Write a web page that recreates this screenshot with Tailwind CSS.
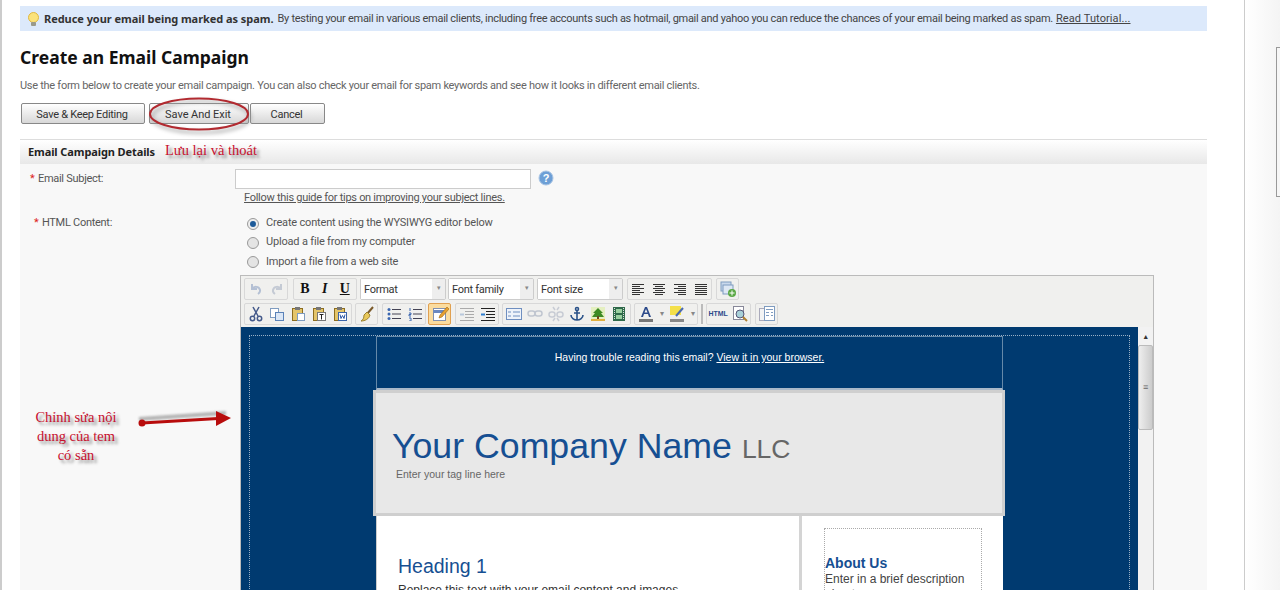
<!DOCTYPE html>
<html lang="vi">
<head>
  <meta charset="UTF-8">
  <title>Create an Email Campaign</title>
  <script src="https://cdn.jsdelivr.net/npm/@tailwindcss/browser@4"></script>
</head>
<body class="relative flex h-[590px] w-[1280px] overflow-hidden bg-white text-[11px] tracking-[-0.28px] text-[#555] [font-family:Roboto,sans-serif]">

  <!-- Main page -->
  <div class="h-[590px] w-[1245px] shrink-0 overflow-hidden border-r border-l-2 border-r-[#ccc] border-l-[#ccc] pt-[6px] pr-[37px] pl-[18px]">

    <!-- Tip bar -->
    <div class="flex h-[25px] items-center bg-[#dce9fb] pl-[6px] text-[#444]">
      <svg class="mr-[3px] shrink-0" width="15" height="16" viewBox="0 0 15 16"><circle cx="7.5" cy="6.5" r="5" fill="#fbe27a" stroke="#e0b840"/><rect x="5" y="11" width="5" height="4" rx="1" fill="#9a9a8a"/></svg>
      <span class="pt-[1px] font-bold tracking-[-0.05px] whitespace-nowrap text-[#333] [font-family:'Noto_Sans',sans-serif]">Reduce your email being marked as spam.</span>
      <span class="ml-[4px] pt-[2px] tracking-[-0.285px] whitespace-nowrap">By testing your email in various email clients, including free accounts such as hotmail, gmail and yahoo you can reduce the chances of your email being marked as spam.</span>
      <a class="ml-[3px] pt-[2px] tracking-[0.1px] whitespace-nowrap underline">Read Tutorial...</a>
    </div>

    <h1 class="mt-[15px] h-[22px] text-[17.500px] leading-[22px] font-bold tracking-normal text-[#111] [font-family:'Noto_Sans',sans-serif]">Create an Email Campaign</h1>
    <p class="mt-[10px] h-[16px] leading-[16px] text-[#666]">Use the form below to create your email campaign. You can also check your email for spam keywords and see how it looks in different email clients.</p>

    <!-- Buttons -->
    <div class="mt-[9px] flex h-[21px] pl-[1px] text-[#333]">
      <button class="h-[21px] w-[124px] rounded-[2px] border border-[#888] bg-gradient-to-b from-white to-[#d8d8d8] pt-[3px] pr-[2px]">Save &amp; Keep Editing</button>
      <button class="ml-[4px] h-[21px] w-[100px] rounded-[2px] border border-[#888] bg-gradient-to-b from-white to-[#d8d8d8] pt-[3px] pr-[2px] tracking-[-0.05px]">Save And Exit</button>
      <button class="ml-[1px] h-[21px] w-[75px] rounded-[2px] border border-[#888] bg-gradient-to-b from-white to-[#d8d8d8] pt-[3px] pr-[2px]">Cancel</button>
    </div>

    <!-- Section header -->
    <div class="mt-[15px] flex h-[25px] items-center border-t border-[#ddd] bg-gradient-to-b from-white to-[#e8e8e8] pl-[8px] font-bold tracking-[-0.1px] text-[#222] [font-family:'Noto_Sans',sans-serif]">Email Campaign Details</div>

    <!-- Form body -->
    <div class="h-[430px] bg-[#f8f8f8]">
      <div class="flex h-[39px] pt-[5px]">
        <label class="w-[215px] pt-[2px] pl-[10px] leading-[16px]"><span class="mr-[1px] text-[#d22]">*</span> Email Subject:</label>
        <div>
          <div class="flex items-center">
            <input class="h-[20px] w-[296px] border border-[#ccc] bg-white" type="text">
            <svg class="mt-[-3px] ml-[7px]" width="16" height="16" viewBox="0 0 16 16"><circle cx="8" cy="8" r="7" fill="#6d9fd6" stroke="#a8c4e4"/><text x="8" y="12" text-anchor="middle" font-size="11" font-weight="bold" fill="#fff" font-family="Liberation Sans">?</text></svg>
          </div>
          <a class="mt-[2px] block pl-[9px] leading-[14px] whitespace-nowrap underline">Follow this guide for tips on improving your subject lines.</a>
        </div>
      </div>
      <div class="flex h-[72px]">
        <label class="w-[215px] pt-[12px] pl-[14px] leading-[16px]"><span class="mr-[1px] text-[#d22]">*</span> HTML Content:</label>
        <div class="pt-[11px] pl-[12px] tracking-[-0.18px]">
          <div class="flex h-[19px] items-center">
            <span class="mr-[7px] flex h-[12px] w-[12px] items-center justify-center rounded-full border border-[#999] bg-[#eee]"><span class="h-[6px] w-[6px] rounded-full bg-[#1d5b9a]"></span></span>Create content using the WYSIWYG editor below
          </div>
          <div class="flex h-[19px] items-center">
            <span class="mr-[7px] h-[12px] w-[12px] rounded-full border border-[#999] bg-[#e4e4e4]"></span>Upload a file from my computer
          </div>
          <div class="flex h-[20px] items-center">
            <span class="mr-[7px] h-[12px] w-[12px] rounded-full border border-[#999] bg-[#e4e4e4]"></span>Import a file from a web site
          </div>
        </div>
      </div>

      <!-- Editor -->
      <div class="ml-[220px] h-[320px] w-[914px] border border-[#bbb] bg-[#f0f0ee] text-[#333]">

        <!-- Toolbar row 1 -->
        <div class="flex h-[25px] items-center pl-[3px]">
          <div class="flex h-[22px] w-[44px] items-center justify-around rounded-[2px] border border-[#d8d8d8]">
            <svg width="16" height="16" viewBox="0 0 16 16" fill="none" stroke="#b4c0d4" stroke-width="2"><path d="M4 3v5h5M4 8c2-3 7-3 8 1 .4 2-.5 3-2 4"/></svg>
            <svg width="16" height="16" viewBox="0 0 16 16" fill="none" stroke="#c4cad4" stroke-width="2"><path d="M12 3v5H7M12 8c-2-3-7-3-8 1-.4 2 .5 3 2 4"/></svg>
          </div>
          <div class="ml-[5px] flex h-[22px] w-[64px] items-center justify-around rounded-[2px] border border-[#d8d8d8] text-[14px] font-bold text-[#111] [font-family:'Liberation_Serif',serif]">
            <span>B</span><span class="italic">I</span><span class="underline">U</span>
          </div>
          <div class="ml-[3px] flex h-[22px] w-[86px] rounded-[2px] border border-[#ccc]"><span class="flex-1 bg-white pl-[3px] leading-[22px]">Format</span><span class="flex w-[13px] items-center justify-center bg-[#eee] text-[7px] text-[#888]">▾</span></div>
          <div class="ml-[2px] flex h-[22px] w-[86px] rounded-[2px] border border-[#ccc]"><span class="flex-1 bg-white pl-[3px] leading-[22px]">Font family</span><span class="flex w-[13px] items-center justify-center bg-[#eee] text-[7px] text-[#888]">▾</span></div>
          <div class="ml-[3px] flex h-[22px] w-[86px] rounded-[2px] border border-[#ccc]"><span class="flex-1 bg-white pl-[3px] leading-[22px]">Font size</span><span class="flex w-[13px] items-center justify-center bg-[#eee] text-[7px] text-[#888]">▾</span></div>
          <div class="ml-[4px] flex h-[22px] w-[85px] items-center justify-around rounded-[2px] border border-[#d8d8d8]">
            <svg width="14" height="12" viewBox="0 0 14 12" stroke="#333"><path d="M1 1.500h12M1 3.500h8M1 5.500h12M1 7.500h8M1 9.500h12M1 11.500h8"/></svg>
            <svg width="14" height="12" viewBox="0 0 14 12" stroke="#333"><path d="M1 1.500h12M3 3.500h8M1 5.500h12M3 7.500h8M1 9.500h12M3 11.500h8"/></svg>
            <svg width="14" height="12" viewBox="0 0 14 12" stroke="#333"><path d="M1 1.500h12M5 3.500h8M1 5.500h12M5 7.500h8M1 9.500h12M5 11.500h8"/></svg>
            <svg width="14" height="12" viewBox="0 0 14 12" stroke="#333"><path d="M1 1.500h12M1 3.500h12M1 5.500h12M1 7.500h12M1 9.500h12M1 11.500h12"/></svg>
          </div>
          <div class="ml-[4px] flex h-[22px] w-[23px] items-center justify-center rounded-[2px] border border-[#d8d8d8]">
            <svg width="18" height="18" viewBox="0 0 18 18"><rect x="2" y="2" width="10" height="9" fill="#c9d8ec" stroke="#7f9cc0"/><rect x="4" y="5" width="10" height="9" fill="#dde7f4" stroke="#7f9cc0"/><circle cx="13" cy="13" r="4" fill="#5aa845"/><path d="M13 10.500v5M10.500 13h5" stroke="#fff"/></svg>
          </div>
        </div>

        <!-- Toolbar row 2 -->
        <div class="flex h-[26px] items-center pl-[3px]">
          <div class="flex h-[22px] w-[108px] items-center justify-around rounded-[2px] border border-[#d8d8d8]">
            <svg width="16" height="16" viewBox="0 0 16 16" fill="none" stroke="#44598a" stroke-width="1.500"><path d="M5 1l5 9M11 1L6 10"/><circle cx="4.500" cy="12.500" r="2.200"/><circle cx="11.500" cy="12.500" r="2.200"/></svg>
            <svg width="16" height="16" viewBox="0 0 16 16"><rect x="1.500" y="2.500" width="8" height="9" fill="#fff" stroke="#7f9cc0"/><rect x="6.500" y="6.500" width="8" height="8" fill="#dbe7f6" stroke="#5a82b8"/></svg>
            <svg width="16" height="16" viewBox="0 0 16 16"><rect x="2.500" y="2.500" width="10" height="12" fill="#e4c56a" stroke="#8c6d1f"/><rect x="5" y="1" width="5" height="3" fill="#777"/><rect x="7.500" y="7.500" width="7" height="7" fill="#fff" stroke="#7f9cc0"/></svg>
            <svg width="16" height="16" viewBox="0 0 16 16"><rect x="2.500" y="2.500" width="10" height="12" fill="#e4c56a" stroke="#8c6d1f"/><rect x="5" y="1" width="5" height="3" fill="#777"/><rect x="6.500" y="6.500" width="8" height="8" fill="#fff" stroke="#777"/><path d="M8.500 8.500h4M10.500 8.500v5" stroke="#222"/></svg>
            <svg width="16" height="16" viewBox="0 0 16 16"><rect x="2.500" y="2.500" width="10" height="12" fill="#e4c56a" stroke="#8c6d1f"/><rect x="5" y="1" width="5" height="3" fill="#777"/><rect x="6.500" y="6.500" width="8" height="8" fill="#fff" stroke="#3c64a8"/><path d="M8 8.500l1 4 1.500-3 1.500 3 1-4" fill="none" stroke="#2b57a8"/></svg>
          </div>
          <div class="ml-[3px] flex h-[22px] w-[23px] items-center justify-center rounded-[2px] border border-[#d8d8d8]">
            <svg width="18" height="18" viewBox="0 0 18 18"><path d="M15 2l-6 7" stroke="#7a5a2a" stroke-width="2"/><path d="M9 7l3 3c-1 4-5 6-9 6 2-1 3-3 3-6z" fill="#e8c85a" stroke="#9a8030"/></svg>
          </div>
          <div class="ml-[4px] flex h-[22px] w-[44px] items-center justify-around rounded-[2px] border border-[#d8d8d8]">
            <svg width="14" height="14" viewBox="0 0 14 14"><path d="M5 2.500h9M5 7h9M5 11.500h9" stroke="#445"/><circle cx="2" cy="2.500" r="1.500" fill="#3a66b0"/><circle cx="2" cy="7" r="1.500" fill="#3a66b0"/><circle cx="2" cy="11.500" r="1.500" fill="#3a66b0"/></svg>
            <svg width="14" height="14" viewBox="0 0 14 14"><path d="M5 2.500h9M5 7h9M5 11.500h9" stroke="#445"/><path d="M2 1v3M1 6h2v1.500H1V9h2M1 11h2v3H1" fill="none" stroke="#3a66b0"/></svg>
          </div>
          <div class="ml-[2px] flex h-[22px] w-[23px] items-center justify-center rounded-[2px] border border-[#e0a050] bg-[#fbdc9e]">
            <svg width="18" height="18" viewBox="0 0 18 18"><rect x="2.500" y="3.500" width="12" height="12" fill="#fff" stroke="#8090b0"/><path d="M2.500 6.500h12" stroke="#6a88c0" stroke-width="3"/><path d="M16 2l-7 8-1 3 3-1 7-8z" fill="#e8a030" stroke="#a06a10" stroke-width=".6"/></svg>
          </div>
          <div class="ml-[4px] flex h-[22px] w-[44px] items-center justify-around rounded-[2px] border border-[#d8d8d8]">
            <svg width="15" height="14" viewBox="0 0 15 14" stroke="#aaa"><path d="M1 1.500h14M6 4.500h9M6 7.500h9M6 10.500h9M1 13.500h14"/><path d="M1 7.500h4" stroke="#b8c8dc" stroke-width="2"/></svg>
            <svg width="15" height="14" viewBox="0 0 15 14" stroke="#222"><path d="M1 1.500h14M6 4.500h9M6 7.500h9M6 10.500h9M1 13.500h14"/><path d="M1 7.500h4" stroke="#2f7fd0" stroke-width="2"/></svg>
          </div>
          <div class="ml-[3px] flex h-[22px] w-[129px] items-center justify-around rounded-[2px] border border-[#d8d8d8]">
            <svg width="16" height="16" viewBox="0 0 16 16"><rect x=".5" y="2.500" width="15" height="11" fill="#eef3fa" stroke="#6f8fc0"/><path d="M2 6h3M7 6h7M2 10h3M7 10h7" stroke="#6f8fc0"/></svg>
            <svg width="16" height="16" viewBox="0 0 16 16" fill="none" stroke="#c0c6d0" stroke-width="1.500"><rect x="1" y="5" width="7" height="5" rx="2.500"/><rect x="8" y="5" width="7" height="5" rx="2.500"/></svg>
            <svg width="16" height="16" viewBox="0 0 16 16" fill="none" stroke="#c8ccd4" stroke-width="1.500"><rect x="1" y="6" width="6" height="5" rx="2.500"/><rect x="9" y="6" width="6" height="5" rx="2.500"/><path d="M5 1l2 3M11 1L9 4M5 15l2-3M11 15l-2-3"/></svg>
            <svg width="16" height="16" viewBox="0 0 16 16" fill="none" stroke="#2a5288" stroke-width="1.600"><circle cx="8" cy="3" r="1.500"/><path d="M8 4.500V14M5 7h6M2 9c0 3 3 5 6 5s6-2 6-5"/></svg>
            <svg width="16" height="16" viewBox="0 0 16 16"><rect x="1" y="1" width="14" height="14" fill="#e4efc0"/><path d="M8 2l5 5-2 0 3 4H2l3-4-2 0z" fill="#3d8a24"/><rect x="7" y="10" width="2" height="3" fill="#6b4a1e"/><rect x="1" y="13" width="14" height="2" fill="#e0b040"/></svg>
            <svg width="16" height="16" viewBox="0 0 16 16"><rect x="2" y="1" width="12" height="14" fill="#2f6a4a"/><rect x="5" y="3" width="6" height="4" fill="#9ad0a0"/><rect x="5" y="9" width="6" height="4" fill="#9ad0a0"/><path d="M3.500 2v12M12.500 2v12" stroke="#ddd" stroke-dasharray="1 1"/></svg>
          </div>
          <div class="ml-[3px] flex h-[22px] w-[64px] items-center justify-around rounded-[2px] border border-[#d8d8d8] text-[8px] text-[#888]">
            <svg width="18" height="18" viewBox="0 0 18 18"><path d="M4 12l4-10h2l4 10h-2l-1-3H7l-1 3zM7.500 7.500h3L9 4z" fill="#2c4a8a"/><rect x="2" y="14" width="14" height="3" fill="#777"/></svg><span>▾</span>
            <svg width="18" height="18" viewBox="0 0 18 18"><rect x="2" y="14" width="14" height="3" fill="#888"/><rect x="2" y="1" width="11" height="9" fill="#f4e04a"/><path d="M15 3l-7 8" stroke="#4a6ab0" stroke-width="2"/></svg><span>▾</span>
          </div>
          <div class="mx-[3px] h-[20px] w-[2px] bg-[#bbb]"></div>
          <div class="flex h-[22px] w-[45px] items-center justify-around rounded-[2px] border border-[#d8d8d8]">
            <span class="text-[7px] font-bold tracking-normal text-[#2c4a8a] [font-family:'Liberation_Sans',sans-serif]">HTML</span>
            <svg width="18" height="18" viewBox="0 0 18 18"><rect x="2.500" y="1.500" width="10" height="13" fill="#fff" stroke="#889"/><circle cx="9" cy="9" r="4" fill="#a8d0d8" stroke="#557"/><path d="M12 12l4 4" stroke="#b08030" stroke-width="2"/></svg>
          </div>
          <div class="ml-[4px] flex h-[22px] w-[23px] items-center justify-center rounded-[2px] border border-[#d8d8d8]">
            <svg width="18" height="18" viewBox="0 0 18 18"><rect x="1.500" y="3.500" width="9" height="12" fill="#f4f4f4" stroke="#aab"/><rect x="6.500" y="1.500" width="10" height="14" fill="#fff" stroke="#7f9cc0"/><path d="M8 4.500h7M8 7.500h3M13 7.500h2M8 10.500h3M13 10.500h2" stroke="#7f9cc0"/></svg>
          </div>
        </div>

        <!-- Editing area -->
        <div class="flex h-[270px]">
          <div class="h-[270px] w-[897px] shrink-0 overflow-hidden bg-[#003a70] pt-[8px] pl-[8px] tracking-normal [font-family:'Liberation_Sans',sans-serif]">
            <div class="h-[270px] w-[881px] border border-dotted border-white/60 pl-[126px]">
              <div class="w-[627px]">
                <!-- Browser link row -->
                <div class="flex h-[54px] items-start justify-center border-x border-t border-b-2 border-x-white/40 border-t-white/40 border-b-[#a9b8c8] pt-[13px] text-[10.500px] leading-[14px] text-white">Having trouble reading this email?&nbsp;<a class="underline">View it in your browser.</a></div>
                <!-- Company header -->
                <div class="mr-[-2px] ml-[-3px] h-[126px] border-[3px] border-[#cfcfcf] bg-[#e8e8e8] pt-[31px] pl-[16px]">
                  <div class="h-[44px] leading-[44px] whitespace-nowrap text-[#164f92]"><span class="text-[35.700px]">Your Company Name</span><span class="ml-[10px] text-[26.500px] text-[#666]">LLC</span></div>
                  <p class="mt-[-1px] pl-[4px] text-[10.500px] leading-[14px] text-[#666]">Enter your tag line here</p>
                </div>
                <!-- Content columns -->
                <div class="flex bg-white">
                  <div class="h-[100px] w-[426px] border-x border-r-[3px] border-l-[#ccc] border-r-[#d4d4d4] pt-[38px] pl-[21px]">
                    <h2 class="text-[19.500px] leading-[24px] text-[#164f92]">Heading 1</h2>
                    <p class="mt-[4px] text-[12px] leading-[16px] whitespace-nowrap text-[#333]">Replace this text with your email content and images.</p>
                  </div>
                  <div class="flex-1 pt-[12px] pl-[22px]">
                    <div class="h-[90px] w-[158px] border border-dotted border-[#aaa] pt-[26px]">
                      <h3 class="text-[14px] leading-[16px] font-bold text-[#164f92]">About Us</h3>
                      <p class="mt-[1px] text-[12px] leading-[15px] text-[#444]">Enter in a brief description about</p>
                    </div>
                  </div>
                </div>
              </div>
            </div>
          </div>
          <!-- Editor scrollbar -->
          <div class="h-[270px] w-[15px] bg-[#f2f2f2] pt-[2px]">
            <div class="h-[16px] text-center text-[7px] leading-[16px] text-[#333]">▲</div>
            <div class="flex h-[85px] items-center justify-center rounded-[2px] border border-[#bbb] bg-gradient-to-r from-[#eee] to-[#ccc] text-[9px] leading-[9px] text-[#666]">≡</div>
          </div>
        </div>
      </div>
    </div>
  </div>

  <!-- Outer gutter -->
  <div class="flex h-[590px] flex-1 flex-col items-end bg-gradient-to-r from-white to-[#f4f4f4]">
    <div class="mt-[47px] h-[150px] w-[4px] border-y border-l border-[#999] bg-[#f6f6f6]"></div>
  </div>

  <!-- Annotations over the page -->
  <svg class="absolute top-[96px] left-[149px] drop-shadow-[2px_3px_2px_#999]" width="102" height="38" viewBox="0 0 102 38"><ellipse cx="50" cy="18" rx="49" ry="15.500" fill="none" stroke="#b22a30" stroke-width="2"/></svg>
  <span class="absolute top-[141px] left-[165px] text-[14.500px] leading-[18px] tracking-normal text-[#c8102e] [font-family:'Liberation_Serif',serif] [text-shadow:3px_3px_3px_#888]">Lưu lại và thoát</span>
  <p class="absolute top-[408px] left-[26px] w-[100px] text-center text-[14.500px] leading-[19px] tracking-normal text-[#c8102e] [font-family:'Liberation_Serif',serif] [text-shadow:3px_3px_3px_#888]">Chỉnh sửa nội<br>dung của tem<br>có sẵn</p>
  <svg class="absolute top-[405px] left-[134px]" width="100" height="30" viewBox="0 0 100 30"><path class="blur-[1px]" d="M5 14L92 8" stroke="#888" stroke-width="4" opacity=".6" fill="none"/><path d="M8 18L84 13.500" stroke="#b80c0c" stroke-width="3" fill="none"/><circle cx="8" cy="18" r="3.500" fill="#b80c0c"/><path d="M82 6L97 13 82 21z" fill="#b80c0c"/></svg>
</body>
</html>
